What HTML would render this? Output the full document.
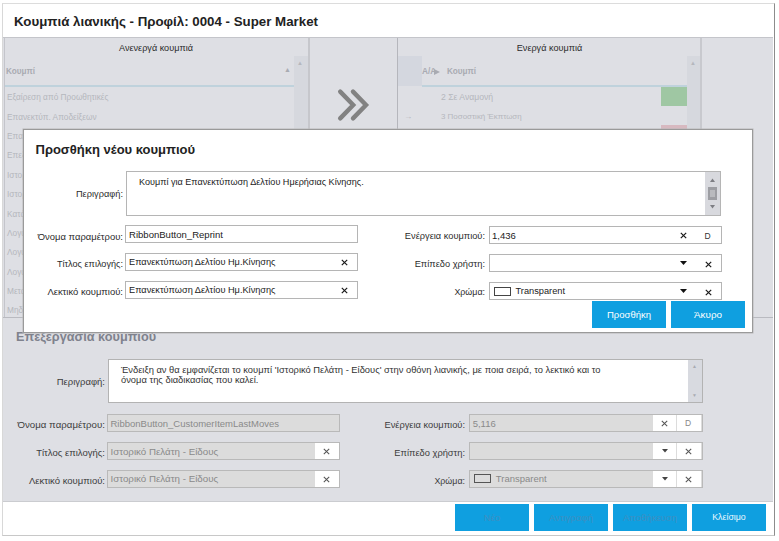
<!DOCTYPE html>
<html><head><meta charset="utf-8">
<style>
*{margin:0;padding:0;box-sizing:border-box}
html,body{width:779px;height:541px;overflow:hidden;background:#fff;font-family:"Liberation Sans",sans-serif;color:#333}
.a{position:absolute}
.t{position:absolute;white-space:nowrap;line-height:1}
.r{text-align:right}
#win{left:2px;top:3px;width:773px;height:533px;border-left:1px solid #d8d8d8;border-top:1px solid #dcdcdc;border-right:1px solid #8c8c8c;border-bottom:1px solid #c8c8c8;background:#fff}
#panel{left:3px;top:37px;width:770px;height:465px;background:#dedfe4;border-top:1px solid #c4c5ca;border-bottom:1px solid #cbccd0}
.grid{background:#dddee3;border-right:1px solid #b9bac0;border-bottom:1px solid #b9bac0}
.rowt{font-size:8.3px;color:#b5b7bd}
.hdr{font-size:8.2px;font-weight:bold;color:#a9abb2}
.lbl{font-size:9.25px;color:#2b2b2b}
.inp{position:absolute;background:#fff;border:1px solid #b5b5b5}
.btn{position:absolute;background:#0f9fe0;color:#fff;font-size:9.5px;text-align:center}
.dlbl{font-size:9.5px;color:#3c3c3c}
.dinp{position:absolute;background:#dcdcdc;border:1px solid #b9b9b9}
</style></head><body>
<div id="win" class="a"></div>
<div class="t" style="left:14px;top:15.3px;font-size:13.3px;font-weight:bold;color:#222">Κουμπιά λιανικής - Προφίλ: 0004 - Super Market</div>
<div id="panel" class="a"></div>

<!-- left list panel -->
<div class="a" style="left:4px;top:38px;width:306px;height:280px;border-left:1px solid #c4c5cb;border-right:2px solid #c6c7cc;border-bottom:1px solid #b9bac0"></div>
<div class="t lbl" style="left:4px;width:304px;text-align:center;top:44.2px;color:#2b2b2b;font-size:9.1px">Ανενεργά κουμπιά</div>
<div class="a" style="left:5px;top:85px;width:290px;height:2px;background:#bfd2dc"></div>
<div class="t hdr" style="left:6px;top:68px">Κουμπί</div>
<div class="t" style="left:284px;top:66px;font-size:7px;color:#a9abb2">▲</div>
<div class="a" style="left:294px;top:56px;width:14px;height:261px;background:#d6d8de"></div>
<div class="t" style="left:297px;top:60px;font-size:6px;color:#b5b7bd">▲</div>
<div class="t rowt" style="left:7px;top:93.4px">Εξαίρεση από Προωθητικές</div>
<div class="t rowt" style="left:7px;top:112.7px">Επανεκτύπ. Αποδείξεων</div>
<div class="t rowt" style="left:7px;top:132.1px">Επανεκτύπ. Δελτίου</div>
<div class="t rowt" style="left:7px;top:151.4px">Επεξεργασία</div>
<div class="t rowt" style="left:7px;top:170.8px">Ιστορικό Πελάτη</div>
<div class="t rowt" style="left:7px;top:190.1px">Ιστορικό Είδους</div>
<div class="t rowt" style="left:7px;top:209.5px">Κατάσταση</div>
<div class="t rowt" style="left:7px;top:228.8px">Λογαριασμός</div>
<div class="t rowt" style="left:7px;top:248.2px">Λογαριασμός</div>
<div class="t rowt" style="left:7px;top:267.5px">Λογαριασμός</div>
<div class="t rowt" style="left:7px;top:286.9px">Μετακίνηση</div>
<div class="t rowt" style="left:7px;top:306.2px">Μηδενισμός</div>

<!-- chevrons -->
<svg class="a" style="left:335px;top:87px" width="36" height="36" viewBox="0 0 36 36">
<path d="M5.2 4.6 L18.2 18 L5.2 31.4 M18 4.6 L31 18 L18 31.4" fill="none" stroke="#828282" stroke-width="4.4" stroke-linecap="round" stroke-linejoin="miter"/>
</svg>

<!-- right list panel -->
<div class="a" style="left:397px;top:38px;width:305px;height:280px;border-left:1px solid #b5b6bc;border-right:2px solid #c8c9ce;border-bottom:1px solid #b9bac0"></div>
<div class="t lbl" style="left:398px;width:303px;text-align:center;top:44.2px;font-size:9.1px">Ενεργά κουμπιά</div>
<div class="a" style="left:398px;top:56px;width:24px;height:30px;background:#d4d7df"></div>
<div class="a" style="left:422px;top:85px;width:265px;height:2px;background:#bfd2dc"></div>
<div class="t hdr" style="left:422px;top:68px">A/A</div><svg class="a" style="left:434px;top:69px" width="6" height="6"><path d="M0 0 L6 3 L0 6Z" fill="#a9abb2"/></svg>
<div class="t hdr" style="left:447px;top:68px">Κουμπί</div>
<div class="a" style="left:687px;top:56px;width:13px;height:261px;background:#d6d8de"></div>
<div class="t" style="left:690px;top:60px;font-size:6px;color:#b5b7bd">▲</div>
<div class="t rowt" style="left:441px;top:93.3px;font-size:8.65px">2 Σε Αναμονή</div>
<div class="t rowt" style="left:441px;top:112.5px;font-size:7.95px">3 Ποσοστική Έκπτωση</div>
<div class="t rowt" style="left:404px;top:112px">→</div>
<div class="a" style="left:661px;top:87px;width:26px;height:19px;background:#9fc7a3"></div>
<div class="a" style="left:661px;top:125px;width:26px;height:4px;background:#d7b9c0"></div>

<!-- edit section (background) -->
<div class="a" style="left:3px;top:317px;width:770px;height:1px;background:#b9bac0"></div>
<div class="t" style="left:16px;top:330.5px;font-size:12.7px;font-weight:bold;color:#7f828d">Επεξεργασία κουμπιού</div>
<div class="t dlbl r" style="right:674px;top:377.3px">Περιγραφή:</div>
<div class="inp" style="left:108px;top:359px;width:595px;height:44px;border-color:#b3b3b3"></div>
<div class="a" style="left:688px;top:360px;width:14px;height:42px;background:#d8dae0"></div>
<div class="t" style="left:692px;top:364px;font-size:5px;color:#a9abb2">▲</div>
<div class="t" style="left:692px;top:393px;font-size:5px;color:#a9abb2">▼</div>
<div class="t" style="left:121px;top:365px;font-size:9.35px;line-height:10.4px;color:#333">Ένδειξη αν θα εμφανίζεται το κουμπί 'Ιστορικό Πελάτη - Είδους' στην οθόνη λιανικής, με ποια σειρά, το λεκτικό και το<br>όνομα της διαδικασίας που καλεί.</div>

<div class="t dlbl r" style="right:674px;top:420.2px;font-size:9.7px">Όνομα παραμέτρου:</div>
<div class="t dlbl r" style="right:674px;top:448.2px">Τίτλος επιλογής:</div>
<div class="t dlbl r" style="right:674px;top:475.8px">Λεκτικό κουμπιού:</div>
<div class="dinp" style="left:107px;top:414px;width:233px;height:18px"></div>
<div class="dinp" style="left:107px;top:442px;width:233px;height:18px"></div>
<div class="dinp" style="left:107px;top:470px;width:233px;height:18px"></div>

<div class="t dlbl r" style="right:314px;top:421.2px;font-size:9.3px">Ενέργεια κουμπιού:</div>
<div class="t dlbl r" style="right:314px;top:449.4px;font-size:9.3px">Επίπεδο χρήστη:</div>
<div class="t dlbl r" style="right:314px;top:477.4px;font-size:8.9px">Χρώμα:</div>
<div class="dinp" style="left:469px;top:414px;width:234px;height:18px"></div>
<div class="dinp" style="left:469px;top:442px;width:234px;height:18px"></div>
<div class="dinp" style="left:469px;top:470px;width:234px;height:18px"></div>


<div class="t dlbl" style="left:110.5px;top:419px;color:#8a8a8a">RibbonButton_CustomerItemLastMoves</div>
<div class="t dlbl" style="left:110.5px;top:446.7px;color:#8a8a8a;font-size:9.75px">Ιστορικό Πελάτη - Είδους</div>
<div class="t dlbl" style="left:110.5px;top:474.4px;color:#8a8a8a;font-size:9.75px">Ιστορικό Πελάτη - Είδους</div>
<div class="a" style="left:315px;top:443px;width:24px;height:16px;background:#fff"></div>
<div class="a" style="left:315px;top:471px;width:24px;height:16px;background:#fff"></div>
<svg class="a" style="left:323px;top:447.5px" width="7" height="7"><path d="M0.8 0.8 L6.2 6.2 M6.2 0.8 L0.8 6.2" stroke="#555" stroke-width="1.05"/></svg>
<svg class="a" style="left:323px;top:475.5px" width="7" height="7"><path d="M0.8 0.8 L6.2 6.2 M6.2 0.8 L0.8 6.2" stroke="#555" stroke-width="1.05"/></svg>

<div class="t dlbl" style="left:472.7px;top:419px;color:#8a8a8a">5,116</div>
<div class="a" style="left:653px;top:415px;width:23px;height:16px;background:#fff"></div>
<div class="a" style="left:677px;top:415px;width:24px;height:16px;background:#fff"></div>
<div class="a" style="left:653px;top:443px;width:23px;height:16px;background:#fff"></div>
<div class="a" style="left:677px;top:443px;width:24px;height:16px;background:#fff"></div>
<div class="a" style="left:653px;top:471px;width:23px;height:16px;background:#fff"></div>
<div class="a" style="left:677px;top:471px;width:24px;height:16px;background:#fff"></div>
<svg class="a" style="left:661px;top:419.5px" width="7" height="7"><path d="M0.8 0.8 L6.2 6.2 M6.2 0.8 L0.8 6.2" stroke="#555" stroke-width="1.05"/></svg>
<div class="t" style="left:685px;top:419px;font-size:8.5px;color:#888">D</div>
<svg class="a" style="left:661.5px;top:449px" width="6" height="4"><path d="M0 0 L6 0 L3 3.5Z" fill="#444"/></svg>
<svg class="a" style="left:685px;top:447.5px" width="7" height="7"><path d="M0.8 0.8 L6.2 6.2 M6.2 0.8 L0.8 6.2" stroke="#555" stroke-width="1.05"/></svg>
<svg class="a" style="left:661.5px;top:477px" width="6" height="4"><path d="M0 0 L6 0 L3 3.5Z" fill="#444"/></svg>
<svg class="a" style="left:685px;top:475.5px" width="7" height="7"><path d="M0.8 0.8 L6.2 6.2 M6.2 0.8 L0.8 6.2" stroke="#555" stroke-width="1.05"/></svg>
<div class="a" style="left:474px;top:474px;width:17px;height:9px;border:1px solid #555"></div>
<div class="t dlbl" style="left:495.8px;top:474.4px;color:#8a8a8a">Transparent</div>

<!-- footer buttons -->
<div class="btn" style="left:455px;top:504px;width:74px;height:27px;line-height:27px;color:#3d8fc2">Νέο</div>
<div class="btn" style="left:534px;top:504px;width:74px;height:27px;line-height:27px;color:#3d8fc2">Αντιγραφή</div>
<div class="btn" style="left:613px;top:504px;width:74px;height:27px;line-height:27px;color:#3d8fc2">Αποθήκευση</div>
<div class="btn" style="left:692px;top:504px;width:74px;height:27px;line-height:27px;font-size:8.8px;color:#eaf8ff">Κλείσιμο</div>

<!-- dialog -->
<div class="a" style="left:23px;top:129px;width:730px;height:204px;background:#fff;border:1px solid #9a9a9a;box-shadow:0 0 0 0.5px #b8b8b8"></div>
<div class="t" style="left:35.5px;top:142.5px;font-size:13px;font-weight:bold;color:#222">Προσθήκη νέου κουμπιού</div>

<div class="t lbl r" style="right:656px;top:190.4px">Περιγραφή:</div>
<div class="inp" style="left:126px;top:171px;width:595px;height:45px"></div>
<div class="t" style="left:139px;top:178.2px;font-size:9.07px;color:#222">Κουμπί για Επανεκτύπωση Δελτίου Ημερήσιας Κίνησης.</div>
<div class="a" style="left:705px;top:172px;width:15px;height:43px;background:#d8d9de"></div>

<div class="t lbl r" style="right:656px;top:231.6px;font-size:9.45px">Όνομα παραμέτρου:</div>
<div class="t lbl r" style="right:656px;top:260.4px;font-size:9.15px">Τίτλος επιλογής:</div>
<div class="t lbl r" style="right:656px;top:287.2px;font-size:9.45px">Λεκτικό κουμπιού:</div>
<div class="inp" style="left:125px;top:225px;width:233px;height:18px"></div>
<div class="inp" style="left:125px;top:253px;width:233px;height:18px"></div>
<div class="inp" style="left:125px;top:281px;width:233px;height:18px"></div>
<div class="t lbl" style="left:129px;top:230px;color:#222;font-size:9.55px">RibbonButton_Reprint</div>
<div class="t lbl" style="left:129px;top:258px;color:#222;font-size:9.2px">Επανεκτύπωση Δελτίου Ημ.Κίνησης</div>
<div class="t lbl" style="left:129px;top:286px;color:#222;font-size:9.2px">Επανεκτύπωση Δελτίου Ημ.Κίνησης</div>

<div class="t lbl r" style="right:294px;top:231.6px">Ενέργεια κουμπιού:</div>
<div class="t lbl r" style="right:294px;top:260.2px">Επίπεδο χρήστη:</div>
<div class="t lbl r" style="right:294px;top:288.1px;font-size:8.9px">Χρώμα:</div>
<div class="inp" style="left:489px;top:226px;width:233px;height:18px"></div>
<div class="inp" style="left:489px;top:254px;width:233px;height:18px"></div>
<div class="inp" style="left:489px;top:282px;width:233px;height:18px"></div>
<div class="t lbl" style="left:492px;top:231px;color:#222;font-size:9.5px">1,436</div>

<div class="btn" style="left:592px;top:301px;width:74px;height:27px;line-height:27px">Προσθήκη</div>
<div class="btn" style="left:671px;top:301px;width:74px;height:27px;line-height:27px;font-size:9.9px">Άκυρο</div>

<!-- dialog scrollbar -->
<svg class="a" style="left:710px;top:178px" width="5" height="4"><path d="M0 4 L2.5 0.5 L5 4Z" fill="#7d7e83"/></svg>
<div class="a" style="left:708px;top:187px;width:9px;height:13px;background:#9d9ea3"></div>
<div class="a" style="left:710px;top:190px;width:5px;height:7px;background:#b9babe"></div>
<svg class="a" style="left:710px;top:205px" width="5" height="4"><path d="M0 0 L2.5 3.5 L5 0Z" fill="#7d7e83"/></svg>

<!-- dialog input icons -->
<svg class="a x1" style="left:340.5px;top:258.5px" width="7" height="7"><path d="M0.8 0.8 L6.2 6.2 M6.2 0.8 L0.8 6.2" stroke="#1a1a1a" stroke-width="1.2"/></svg>
<svg class="a x1" style="left:340.5px;top:286.5px" width="7" height="7"><path d="M0.8 0.8 L6.2 6.2 M6.2 0.8 L0.8 6.2" stroke="#1a1a1a" stroke-width="1.2"/></svg>
<svg class="a" style="left:680px;top:232px" width="7" height="7"><path d="M0.8 0.8 L6.2 6.2 M6.2 0.8 L0.8 6.2" stroke="#1a1a1a" stroke-width="1.2"/></svg>
<div class="t" style="left:704.5px;top:231.5px;font-size:8.5px;color:#333">D</div>
<svg class="a" style="left:680px;top:261px" width="7" height="4"><path d="M0 0 L7 0 L3.5 4Z" fill="#111"/></svg>
<svg class="a" style="left:704.5px;top:260.5px" width="7" height="7"><path d="M0.8 0.8 L6.2 6.2 M6.2 0.8 L0.8 6.2" stroke="#1a1a1a" stroke-width="1.2"/></svg>
<svg class="a" style="left:680px;top:289px" width="7" height="4"><path d="M0 0 L7 0 L3.5 4Z" fill="#111"/></svg>
<svg class="a" style="left:704.5px;top:288.5px" width="7" height="7"><path d="M0.8 0.8 L6.2 6.2 M6.2 0.8 L0.8 6.2" stroke="#1a1a1a" stroke-width="1.2"/></svg>
<div class="a" style="left:493.5px;top:286.5px;width:17px;height:9px;border:1px solid #444"></div>
<div class="t lbl" style="left:515.5px;top:287px;color:#222">Transparent</div>
</body></html>
